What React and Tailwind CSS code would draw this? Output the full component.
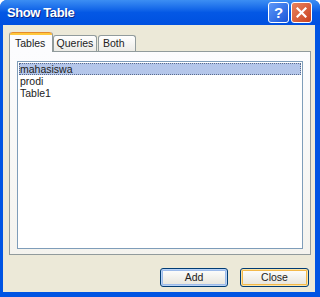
const items = ["mahasiswa", "prodi", "Table1"];

const ShowTable = () => {
  return (
    <div
      className="flex h-[297px] w-[320px] flex-col overflow-hidden rounded-t-[7px] bg-[#0054E3]"
      style={{ fontFamily: '"Liberation Sans", Arial, sans-serif' }}
    >
      {/* Title bar */}
      <div className="flex h-[25px] shrink-0 items-center bg-gradient-to-b from-[#3C8EF3] via-[#0458E5] to-[#0050E0] pl-[7px] pr-[8px]">
        <span className="flex-1 text-[13px] font-bold tracking-[-0.4px] text-white [text-shadow:1px_1px_0_#0A2A8A]">
          Show Table
        </span>
        <div className="flex gap-[2px]">
          <button className="flex h-[21px] w-[21px] items-center justify-center rounded-[3px] border border-white bg-gradient-to-br from-[#5D97F8] to-[#1A54D8] text-[15px] font-bold leading-none text-white">
            ?
          </button>
          <button className="flex h-[21px] w-[21px] items-center justify-center rounded-[3px] border border-white bg-gradient-to-br from-[#E8835F] to-[#C9401C]">
            <svg width="11" height="11" viewBox="0 0 11 11">
              <path d="M1.5 1.5 L9.5 9.5 M9.5 1.5 L1.5 9.5" stroke="white" strokeWidth="2.2" strokeLinecap="square" />
            </svg>
          </button>
        </div>
      </div>

      {/* Body */}
      <div className="mx-[3px] mb-[5px] mr-[5px] flex flex-1 flex-col bg-[#ECE9D8] pt-[8px] pl-[6px] pr-[4px] text-[10.5px] text-[#222]">
        {/* Tabs */}
        <div className="flex h-[18px] items-end">
          <div className="relative z-10 -mb-px flex h-[20px] w-[44px] flex-col rounded-t-[3px] border-x border-[#919B9C] bg-[#FCFCFE]">
            <div className="h-[3px] rounded-t-[3px] border-t border-[#E68B2C] bg-[#FFC83C]" />
            <span className="pl-[5px] pt-[1px]">Tables</span>
          </div>
          <div className="flex h-[16px] w-[44px] items-center justify-center rounded-t-[3px] border border-b-0 border-[#919B9C] bg-gradient-to-b from-white to-[#ECEBE6]">
            Queries
          </div>
          <div className="ml-px flex h-[16px] w-[38px] items-center rounded-t-[3px] border border-b-0 border-[#919B9C] bg-gradient-to-b from-white to-[#ECEBE6] pl-[4px]">
            Both
          </div>
        </div>

        {/* Tab panel */}
        <div className="h-[204px] w-[302px] border border-[#919B9C] bg-gradient-to-b from-[#FCFCFE] to-[#F4F3EE] px-[7px] pt-[9px]">
          <div className="h-[188px] w-[286px] border border-[#7F9DB9] bg-white p-px">
            {items.map((item, i) => (
              <div
                key={item}
                className={
                  i === 0
                    ? "h-[12px] border border-dotted border-[#5A6B8C] bg-[#B4C6EA] leading-[10px]"
                    : "h-[12px] pl-px leading-[12px]"
                }
              >
                {item}
              </div>
            ))}
          </div>
        </div>

        {/* Buttons */}
        <div className="mt-[13px] flex justify-end gap-[12px] pr-[2px]">
          <button className="h-[19px] w-[68px] rounded-[3px] border border-[#003C74] bg-gradient-to-b from-white to-[#E6E4DA] text-[10.5px] shadow-[inset_0_0_0_1px_#B8D2F6,inset_0_0_0_2px_#9DBBEA]">
            Add
          </button>
          <button className="h-[19px] w-[69px] rounded-[3px] border border-[#003C74] bg-gradient-to-b from-white to-[#E6E4DA] text-[10.5px] shadow-[inset_0_0_0_1px_#FCE4A6,inset_0_0_0_2px_#F3B94A]">
            Close
          </button>
        </div>
      </div>
    </div>
  );
};

export default function App() {
  return <ShowTable />;
}
